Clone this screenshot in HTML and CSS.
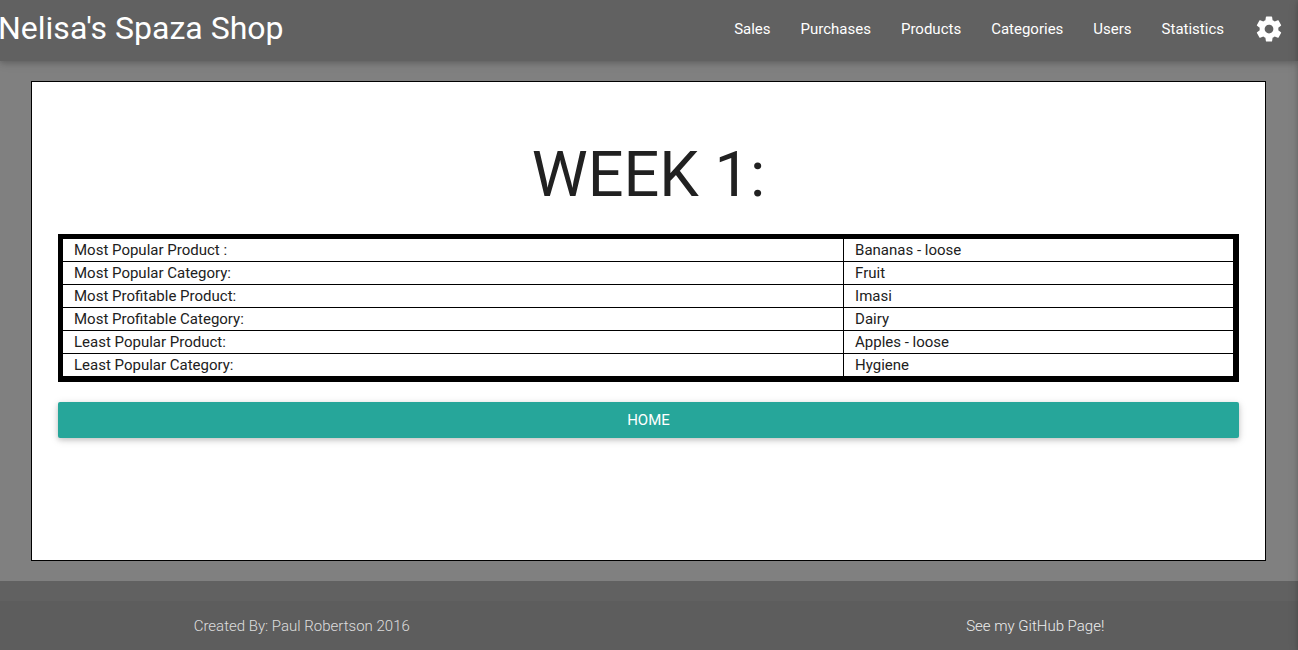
FILE: index.html
```html
<!DOCTYPE html>
<html lang="en">
<head>
<meta charset="utf-8">
<meta name="viewport" content="width=device-width, initial-scale=1">
<title>Nelisa's Spaza Shop</title>
<link rel="stylesheet" href="styles.css">
</head>
<body class="page">
  <header class="navbar">
    <a class="brand" href="#">Nelisa's Spaza Shop</a>
    <nav class="menu" aria-label="Main">
      <a class="menu-link" href="#">Sales</a>
      <a class="menu-link" href="#">Purchases</a>
      <a class="menu-link" href="#">Products</a>
      <a class="menu-link" href="#">Categories</a>
      <a class="menu-link" href="#">Users</a>
      <a class="menu-link" href="#">Statistics</a>
      <a class="menu-link menu-settings" href="#" aria-label="Settings">
        <svg class="gear" viewBox="0 0 24 24" aria-hidden="true"><path d="M19.43 12.98c.04-.32.07-.64.07-.98s-.03-.66-.07-.98l2.11-1.65c.19-.15.24-.42.12-.64l-2-3.46c-.12-.22-.39-.3-.61-.22l-2.49 1c-.52-.4-1.08-.73-1.69-.98l-.38-2.65C14.46 2.18 14.25 2 14 2h-4c-.25 0-.46.18-.49.42l-.38 2.65c-.61.25-1.17.59-1.69.98l-2.49-1c-.23-.09-.49 0-.61.22l-2 3.46c-.13.22-.07.49.12.64l2.11 1.65c-.04.32-.07.65-.07.98s.03.66.07.98l-2.11 1.65c-.19.15-.24.42-.12.64l2 3.46c.12.22.39.3.61.22l2.49-1c.52.4 1.08.73 1.69.98l.38 2.65c.03.24.24.42.49.42h4c.25 0 .46-.18.49-.42l.38-2.65c.61-.25 1.17-.59 1.69-.98l2.49 1c.23.09.49 0 .61-.22l2-3.46c.12-.22.07-.49-.12-.64l-2.11-1.65zM12 15.5c-1.93 0-3.5-1.57-3.5-3.5s1.57-3.5 3.5-3.5 3.5 1.57 3.5 3.5-1.57 3.5-3.5 3.5z"/></svg>
      </a>
    </nav>
  </header>

  <main class="panel">
    <h1 class="title">WEEK 1:</h1>
    <table class="stats">
      <tbody>
        <tr><th class="cell label" scope="row">Most Popular Product :</th><td class="cell">Bananas - loose</td></tr>
        <tr><th class="cell label" scope="row">Most Popular Category:</th><td class="cell">Fruit</td></tr>
        <tr><th class="cell label" scope="row">Most Profitable Product:</th><td class="cell">Imasi</td></tr>
        <tr><th class="cell label" scope="row">Most Profitable Category:</th><td class="cell">Dairy</td></tr>
        <tr><th class="cell label" scope="row">Least Popular Product:</th><td class="cell">Apples - loose</td></tr>
        <tr><th class="cell label" scope="row">Least Popular Category:</th><td class="cell">Hygiene</td></tr>
      </tbody>
    </table>
    <button class="home" type="button">HOME</button>
  </main>

  <footer class="footer">
    <div class="copyright">
      <div class="copyright-row">
        <span class="author">Created By: Paul Robertson 2016</span>
        <a class="github" href="#">See my GitHub Page!</a>
      </div>
    </div>
  </footer>
  <div class="drawer" aria-hidden="true"></div>
</body>
</html>
```
FILE: styles.css
```css
*, *::before, *::after {
  box-sizing: border-box;
}

.page {
  display: flex;
  flex-direction: column;
  min-height: 100vh;
  margin: 0;
  background: #808080;
  color: #212121;
  font-family: Roboto, sans-serif;
  font-size: 15px;
  overflow-x: hidden;
}

.navbar {
  display: flex;
  justify-content: space-between;
  padding-bottom: 3px;
  background: #616161;
  box-shadow: 0 2px 5px 0 rgba(0, 0, 0, 0.16), 0 2px 10px 0 rgba(0, 0, 0, 0.12);
  line-height: 58px;
}

.brand {
  margin-left: -2px;
  color: #fff;
  font-size: 32px;
  line-height: 57px;
  text-decoration: none;
  white-space: nowrap;
}

.menu {
  display: flex;
}

.menu-link {
  padding: 0 15px;
  color: #fff;
  text-decoration: none;
}

.menu-settings {
  display: flex;
  align-items: center;
  padding-right: 14px;
}

.gear {
  width: 30px;
  height: 30px;
  fill: #fff;
}

.panel {
  flex: 1 0 auto;
  margin: 20px 32px 20px 31px;
  padding: 58px 26px 26px;
  border: 1px solid #000;
  background: #fff;
}

.title {
  margin: 0 0 25px;
  font-size: 63px;
  font-weight: 400;
  line-height: 69px;
  text-align: center;
}

.stats {
  width: 100%;
  border: 5px solid #000;
  border-spacing: 0;
}

.cell {
  height: 23px;
  padding: 0 11px;
  border-right: 1px solid #000;
  border-bottom: 1px solid #000;
  line-height: 22px;
  font-weight: 400;
  text-align: left;
}

.label {
  width: 66.7%;
}

.home {
  display: block;
  width: 100%;
  height: 36px;
  margin-top: 20px;
  padding: 0;
  border: 0;
  border-radius: 2px;
  background: #26a69a;
  box-shadow: 0 2px 5px 0 rgba(0, 0, 0, 0.16), 0 2px 10px 0 rgba(0, 0, 0, 0.12);
  color: #fff;
  font-family: inherit;
  font-size: 15px;
  line-height: 36px;
  cursor: pointer;
}

.footer {
  padding-top: 20px;
  background: #616161;
  font-weight: 300;
}

.copyright {
  padding-top: 1px;
  background: rgba(51, 51, 51, 0.08);
  line-height: 48px;
}

.copyright-row {
  display: flex;
  justify-content: space-between;
  width: calc(70% + 2px);
  margin: 0 auto;
}

.author {
  color: rgba(255, 255, 255, 0.8);
}

.github {
  color: #eee;
  text-decoration: none;
}

/* Closed side drawer: only its shadow reaches into the window. */
.drawer {
  position: fixed;
  top: 0;
  bottom: 0;
  left: 100%;
  width: 240px;
  box-shadow: 0 2px 5px 0 rgba(0, 0, 0, 0.16), 0 2px 10px 0 rgba(0, 0, 0, 0.12);
}
```
